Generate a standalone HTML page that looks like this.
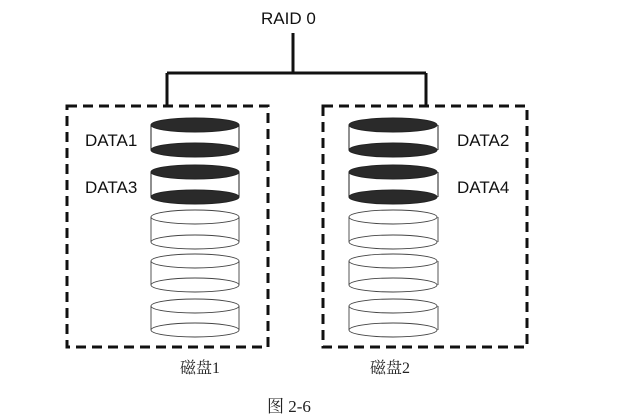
<!DOCTYPE html><html><head><style>body{margin:0;background:#fff}svg{display:block}</style></head><body>
<svg width="622" height="420" xmlns="http://www.w3.org/2000/svg">
<rect width="622" height="420" fill="#fff"/>
<g font-family="Liberation Sans, sans-serif" font-size="17" fill="#111">
<text x="261" y="24">RAID 0</text>
<text x="85" y="146">DATA1</text><text x="85" y="193">DATA3</text>
<text x="457" y="146">DATA2</text><text x="457" y="193">DATA4</text>
</g>
<g font-family="Liberation Serif, 'Noto Serif CJK SC', serif" font-size="16" fill="#222">
<text x="180" y="373">磁盘1</text><text x="370" y="373">磁盘2</text>
<text x="267" y="412" font-size="17">图 2-6</text>
</g>
<g stroke="#111" stroke-width="3" fill="none">
<path d="M293 33V73M167 73H426M167 73V106M426 73V106"/>
<g stroke-dasharray="10 6"><rect x="67" y="106" width="201" height="241"/><rect x="323" y="106" width="204" height="241"/></g>
</g>
<g stroke="#222" stroke-width="1">
<path d="M151 125V150M239 125V150M151 172V197M239 172V197M349 125V150M438 125V150M349 172V197M438 172V197"/>
<g fill="#2a2a2a">
<ellipse cx="195" cy="125" rx="44" ry="7"/><ellipse cx="195" cy="150" rx="44" ry="7"/>
<ellipse cx="195" cy="172" rx="44" ry="7"/><ellipse cx="195" cy="197" rx="44" ry="7"/>
<ellipse cx="393" cy="125" rx="44" ry="7"/><ellipse cx="393" cy="150" rx="44" ry="7"/>
<ellipse cx="393" cy="172" rx="44" ry="7"/><ellipse cx="393" cy="197" rx="44" ry="7"/>
</g>
<g fill="none" stroke="#444" stroke-width="0.9">
<ellipse cx="195" cy="217" rx="44" ry="7"/><ellipse cx="195" cy="242" rx="44" ry="7"/><path d="M151 217V242M239 217V242"/>
<ellipse cx="195" cy="261" rx="44" ry="7"/><ellipse cx="195" cy="285" rx="44" ry="7"/><path d="M151 261V285M239 261V285"/>
<ellipse cx="195" cy="306" rx="44" ry="7"/><ellipse cx="195" cy="330" rx="44" ry="7"/><path d="M151 306V330M239 306V330"/>
<ellipse cx="393" cy="217" rx="44" ry="7"/><ellipse cx="393" cy="242" rx="44" ry="7"/><path d="M349 217V242M438 217V242"/>
<ellipse cx="393" cy="261" rx="44" ry="7"/><ellipse cx="393" cy="285" rx="44" ry="7"/><path d="M349 261V285M438 261V285"/>
<ellipse cx="393" cy="306" rx="44" ry="7"/><ellipse cx="393" cy="330" rx="44" ry="7"/><path d="M349 306V330M438 306V330"/>
</g>
</g>
</svg>
</body></html>
